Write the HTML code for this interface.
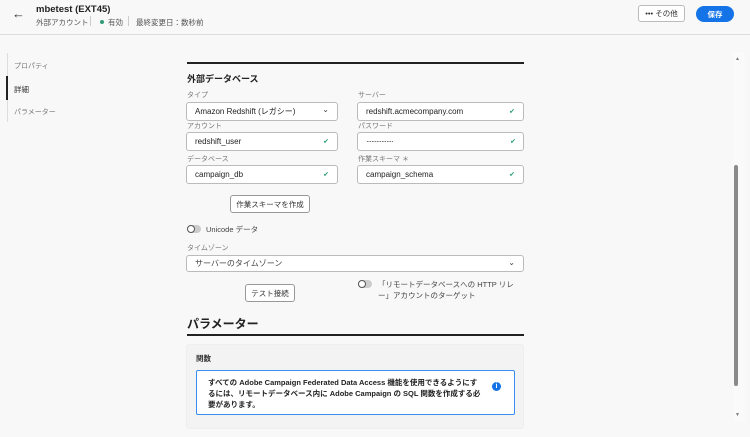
<!DOCTYPE html>
<html><head><meta charset="utf-8"><style>
*{box-sizing:border-box;margin:0;padding:0}
body{width:750px;height:437px;overflow:hidden;background:#f8f8f8;font-family:"Liberation Sans","Noto Sans CJK JP",sans-serif;color:#222;position:relative}
.a{position:absolute}
.lbl{position:absolute;font-size:7px;color:#777}
.f{position:absolute;background:#fff;border:1px solid #bbb;border-radius:3px;font-size:8px;color:#222;padding-left:8px;display:flex;align-items:center}
.ck{position:absolute;right:8px;top:50%;transform:translateY(-55%);color:#2d9d78;font-size:7px}
.chev{position:absolute;right:8px;top:2px;font-size:8px;color:#444}
.btn{position:absolute;background:#fff;border:1px solid #999;border-radius:3px;font-size:7.5px;color:#333;display:flex;align-items:center;justify-content:center}
.tg{position:absolute;width:14px;height:8px;border-radius:4px;background:#ccc}
.tg:before{content:"";position:absolute;left:0;top:0;width:8px;height:8px;border-radius:50%;box-sizing:border-box;border:1.5px solid #555;background:#fff}
</style></head><body>
<div class="a" style="left:0;top:0;width:750px;height:35px;background:#f8f8f8;border-bottom:1px solid #ddd"></div>
<div class="a" style="left:12px;top:6px;font-size:13px;color:#333">←</div>
<div class="a" style="left:36px;top:4px;font-size:9.5px;font-weight:bold">mbetest (EXT45)</div>
<div class="a" style="left:36px;top:17px;font-size:7.5px;color:#555">外部アカウント</div>
<div class="a" style="left:90px;top:16px;width:1px;height:10px;background:#ccc"></div>
<div class="a" style="left:100px;top:20px;width:4px;height:4px;border-radius:50%;background:#2d9d78"></div>
<div class="a" style="left:108px;top:17px;font-size:7.5px;color:#555">有効</div>
<div class="a" style="left:128px;top:16px;width:1px;height:10px;background:#ccc"></div>
<div class="a" style="left:136px;top:17px;font-size:7.5px;color:#555">最終変更日：数秒前</div>
<div class="btn" style="left:638px;top:5px;width:47px;height:17px;border-color:#bbb;font-size:7.5px">••• その他</div>
<div class="a" style="left:696px;top:6px;width:38px;height:16px;border-radius:8px;background:#1473e6;color:#fff;font-size:7.5px;font-weight:bold;display:flex;align-items:center;justify-content:center">保存</div>

<div class="a" style="left:7px;top:53px;width:1px;height:69px;background:#ddd"></div>
<div class="a" style="left:6px;top:76px;width:2px;height:24px;background:#222"></div>
<div class="a" style="left:14px;top:61px;font-size:7px;color:#777">プロパティ</div>
<div class="a" style="left:14px;top:84px;font-size:7.5px;color:#333">詳細</div>
<div class="a" style="left:14px;top:107px;font-size:7px;color:#777">パラメーター</div>

<div class="a" style="left:187px;top:62px;width:337px;height:2px;background:#222"></div>
<div class="a" style="left:187px;top:72px;font-size:9px;font-weight:bold">外部データベース</div>
<div class="lbl" style="left:187px;top:90px">タイプ</div>
<div class="lbl" style="left:358px;top:90px">サーバー</div>
<div class="f" style="left:186px;top:102px;width:152px;height:19px">Amazon Redshift (レガシー)<span class="chev">⌄</span></div>
<div class="f" style="left:357px;top:102px;width:167px;height:19px">redshift.acmecompany.com<span class="ck">✔</span></div>
<div class="lbl" style="left:187px;top:121px">アカウント</div>
<div class="lbl" style="left:358px;top:121px">パスワード</div>
<div class="f" style="left:186px;top:132px;width:152px;height:19px">redshift_user<span class="ck">✔</span></div>
<div class="f" style="left:357px;top:132px;width:167px;height:19px;letter-spacing:-1px">················<span class="ck">✔</span></div>
<div class="lbl" style="left:187px;top:154px">データベース</div>
<div class="lbl" style="left:358px;top:154px">作業スキーマ ＊</div>
<div class="f" style="left:186px;top:165px;width:152px;height:19px">campaign_db<span class="ck">✔</span></div>
<div class="f" style="left:357px;top:165px;width:167px;height:19px">campaign_schema<span class="ck">✔</span></div>

<div class="btn" style="left:230px;top:195px;width:80px;height:18px">作業スキーマを作成</div>
<div class="tg" style="left:187px;top:225px"></div>
<div class="a" style="left:206px;top:224px;font-size:7.5px;color:#444">Unicode データ</div>
<div class="lbl" style="left:187px;top:243px">タイムゾーン</div>
<div class="f" style="left:186px;top:255px;width:338px;height:17px;color:#444">サーバーのタイムゾーン<span class="chev">⌄</span></div>
<div class="btn" style="left:245px;top:284px;width:50px;height:18px">テスト接続</div>
<div class="tg" style="left:358px;top:280px"></div>
<div class="a" style="left:378px;top:279px;font-size:7.5px;color:#444;line-height:11px">「リモートデータベースへの HTTP リレ<br>ー」アカウントのターゲット</div>

<div class="a" style="left:187px;top:315px;font-size:12px;font-weight:bold">パラメーター</div>
<div class="a" style="left:187px;top:334px;width:337px;height:2px;background:#222"></div>
<div class="a" style="left:186px;top:344px;width:338px;height:85px;background:#f3f3f3;border:1px solid #eee;border-radius:3px"></div>
<div class="a" style="left:196px;top:353px;font-size:7.5px;font-weight:bold;color:#333">関数</div>
<div class="a" style="left:196px;top:370px;width:319px;height:45px;background:#fff;border:1.5px solid #378ef0;border-radius:2px"></div>
<div class="a" style="left:208px;top:377px;width:275px;font-size:7.5px;font-weight:bold;line-height:11px;color:#222">すべての Adobe Campaign Federated Data Access 機能を使用できるようにするには、リモートデータベース内に Adobe Campaign の SQL 関数を作成する必要があります。</div>
<div class="a" style="left:492px;top:382px;width:9px;height:9px;border-radius:50%;background:#1473e6;color:#fff;font-size:7px;font-weight:bold;text-align:center;line-height:9px">i</div>

<div class="a" style="left:733px;top:52px;width:12px;height:370px;background:#fafafa"></div>
<div class="a" style="left:735px;top:56px;font-size:5px;color:#777">▲</div>
<div class="a" style="left:735px;top:412px;font-size:5px;color:#777">▼</div>
<div class="a" style="left:734px;top:165px;width:4px;height:221px;border-radius:2px;background:#8a8a8a"></div>
</body></html>
